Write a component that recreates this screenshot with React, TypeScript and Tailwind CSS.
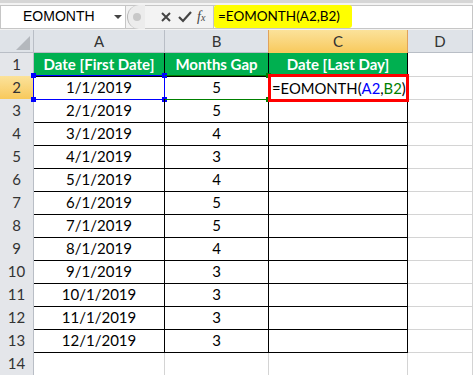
import React from "react";

const rows = [
  ["1/1/2019", "5"],
  ["2/1/2019", "5"],
  ["3/1/2019", "4"],
  ["4/1/2019", "3"],
  ["5/1/2019", "4"],
  ["6/1/2019", "5"],
  ["7/1/2019", "5"],
  ["8/1/2019", "4"],
  ["9/1/2019", "3"],
  ["10/1/2019", "3"],
  ["11/1/2019", "3"],
  ["12/1/2019", "3"],
];

const cols = "grid grid-cols-[34px_131px_104px_139px_1fr]";

function Handle({ className }: { className: string }) {
  return <span className={"absolute w-[5px] h-[5px] " + className} />;
}

export default function App() {
  return (
    <div className="w-[473px] h-[375px] overflow-hidden bg-white font-['Lato','Liberation_Sans',sans-serif] text-[15px] text-black">
      {/* formula bar */}
      <div className="h-[30px] bg-[#f3f3f3] border-t-[3px] border-[#d6d6d6] flex items-center relative">
        <div className="h-[24px] w-[126px] bg-white border border-[#c6c6c6] flex items-center pl-[22px] relative">
          <span className="text-[14px] font-['Liberation_Sans',sans-serif]">EOMONTH</span>
          <span className="absolute right-[3px] top-[9px] w-0 h-0 border-l-[4px] border-r-[4px] border-t-[4px] border-l-transparent border-r-transparent border-t-[#444]" />
        </div>
        <div className="h-[24px] w-[87px] flex items-center border-y border-[#c6c6c6]">
          <div className="w-[18px] h-[24px] rounded-l-full border-l border-[#b8b8b8] bg-[#ececec] flex items-center justify-center ml-[1px]">
            <span className="w-[8px] h-[8px] rounded-full bg-[#c8c8c8]" />
          </div>
          <svg width="14" height="14" viewBox="0 0 14 14" className="ml-[14px]">
            <path d="M3 3 L11 11 M11 3 L3 11" stroke="#444" strokeWidth="2" />
          </svg>
          <svg width="16" height="14" viewBox="0 0 16 14" className="ml-[4px]">
            <path d="M2 7 L6 11 L14 2" stroke="#444" strokeWidth="2.2" fill="none" />
          </svg>
          <span className="ml-[4px] italic font-['Liberation_Serif',serif] text-[14px] text-[#444]">
            f<span className="text-[10px]">x</span>
          </span>
        </div>
        <div className="h-[24px] flex-1 bg-white border border-[#c6c6c6] flex items-center">
          <div className="h-[23px] w-[138px] bg-[#ffff00] rounded-[3px] flex items-center pl-[4px] text-[13.5px]">
            =EOMONTH(A2,B2)
          </div>
        </div>
      </div>

      {/* column headers */}
      <div className={cols + " h-[23px] bg-[#dfe3e8] border-b border-[#b9bec6]"}>
        <div className="border-r border-[#b9bec6] relative">
          <svg width="14" height="14" className="absolute right-[3px] bottom-[3px]">
            <path d="M14 0 L14 14 L0 14 Z" fill="#b4b8bd" />
          </svg>
        </div>
        <div className="border-r border-[#b9bec6] flex items-center justify-center text-[#333] text-[15px]">A</div>
        <div className="border-r border-[#b9bec6] flex items-center justify-center text-[#333] text-[15px]">B</div>
        <div className="border-x border-[#e1a25a] -ml-[1px] bg-gradient-to-b from-[#fbe29a] to-[#f8c95a] flex items-center justify-center text-[#333] text-[15px]">C</div>
        <div className="border-r border-[#b9bec6] flex items-center justify-center text-[#333] text-[15px]">D</div>
      </div>

      {/* row 1 */}
      <div className={cols + " h-[23px]"}>
        <div className="bg-[#e4e6ea] border-r border-b border-[#b9bec6] flex items-center justify-center text-[#333]">1</div>
        <div className="bg-[#00b050] border-r border-b border-black flex items-center justify-center text-white font-bold">Date [First Date]</div>
        <div className="bg-[#00b050] border-r border-b border-black flex items-center justify-center text-white font-bold">Months Gap</div>
        <div className="bg-[#00b050] border-r border-b border-black flex items-center justify-center text-white font-bold">Date [Last Day]</div>
        <div className="border-r border-b border-[#d4d4d4]" />
      </div>

      {rows.map(([d, g], i) => {
        const n = i + 2;
        const active = n === 2;
        return (
          <div key={n} className={cols + " h-[23px]"}>
            <div
              className={
                "border-r border-b flex items-center justify-center text-[#333] " +
                (active
                  ? "bg-gradient-to-b from-[#fbe29a] to-[#f8c95a] border-[#e1a25a]"
                  : "bg-[#e4e6ea] border-[#b9bec6]")
              }
            >
              {n}
            </div>
            <div className="border-r border-b border-black flex items-center justify-center relative">
              {active && (
                <>
                  <span className="absolute -left-[1px] -top-[1px] -right-[1px] -bottom-[1px] border border-[#0000ff]" />
                  <Handle className="bg-[#0000ff] -left-[3px] -top-[3px]" />
                  <Handle className="bg-[#0000ff] -right-[3px] -top-[3px]" />
                  <Handle className="bg-[#0000ff] -left-[3px] -bottom-[3px]" />
                  <Handle className="bg-[#0000ff] -right-[3px] -bottom-[3px]" />
                </>
              )}
              {d}
            </div>
            <div className="border-r border-b border-black flex items-center justify-center relative">
              {active && (
                <>
                  <span className="absolute left-0 -top-[1px] -right-[1px] -bottom-[1px] border border-[#008000] border-l-0" />
                  <Handle className="bg-[#008000] -right-[3px] -top-[3px]" />
                  <Handle className="bg-[#008000] -right-[3px] -bottom-[3px]" />
                </>
              )}
              {g}
            </div>
            <div className="border-r border-b border-black flex items-center relative">
              {active && (
                <div className="absolute -left-[1px] -top-[2px] -right-[2px] -bottom-[3px] border-[3px] border-[#ff0000] flex items-center pl-[1px] z-10 bg-white">
                  <span className="text-[14.8px] whitespace-nowrap">
                    =EOMONTH(<span className="text-[#0000ff]">A2</span>,<span className="text-[#008000]">B2</span>)
                  </span>
                </div>
              )}
            </div>
            <div className="border-r border-b border-[#d4d4d4]" />
          </div>
        );
      })}

      <div className={cols + " h-[23px]"}>
        <div className="bg-[#e4e6ea] border-r border-b border-[#b9bec6] flex items-center justify-center text-[#333]">14</div>
        <div className="border-r border-b border-[#d4d4d4]" />
        <div className="border-r border-b border-[#d4d4d4]" />
        <div className="border-r border-b border-[#d4d4d4]" />
        <div className="border-r border-b border-[#d4d4d4]" />
      </div>
    </div>
  );
}
